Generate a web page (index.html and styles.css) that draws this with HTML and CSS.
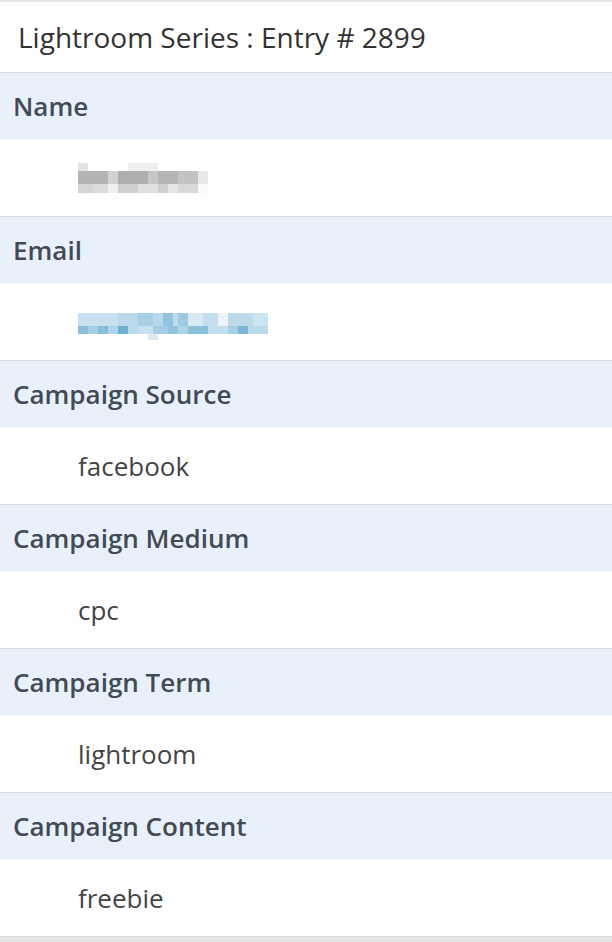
FILE: index.html
```html
<!DOCTYPE html>
<html>
<head>
<meta charset="utf-8">
<link rel="stylesheet" href="styles.css">
</head>
<body>
<div class="panel">
  <div class="title">Lightroom Series : Entry # 2899</div>
  <div class="field">
    <div class="label">Name</div>
    <div class="value"><div class="mosaic mosaic-name"></div></div>
  </div>
  <div class="field">
    <div class="label">Email</div>
    <div class="value"><div class="mosaic mosaic-email"></div></div>
  </div>
  <div class="field">
    <div class="label">Campaign Source</div>
    <div class="value">facebook</div>
  </div>
  <div class="field">
    <div class="label">Campaign Medium</div>
    <div class="value">cpc</div>
  </div>
  <div class="field">
    <div class="label">Campaign Term</div>
    <div class="value">lightroom</div>
  </div>
  <div class="field">
    <div class="label">Campaign Content</div>
    <div class="value">freebie</div>
  </div>
</div>
</body>
</html>
```
FILE: styles.css
```css
html, body {
  margin: 0;
  padding: 0;
  background: #e6e6e6;
}
body {
  font-family: "Open Sans", "Noto Sans", sans-serif;
  width: 612px;
  height: 942px;
  overflow: hidden;
}
.panel {
  margin-top: 2px;
  background: #fff;
}
.title {
  height: 71px;
  box-sizing: border-box;
  padding-left: 18px;
  display: flex;
  align-items: center;
  font-size: 28px;
  color: #333;
  border-bottom: 1px solid #dcdcdc;
}
.field {
  border-bottom: 1px solid #dcdcdc;
}
.label {
  height: 66px;
  display: flex;
  align-items: center;
  padding-left: 13px;
  background: #e8f1fa;
  font-size: 26px;
  font-weight: 600;
  color: #434a54;
}
.value {
  height: 77px;
  display: flex;
  align-items: center;
  padding-left: 78px;
  font-size: 26px;
  color: #444;
  background: #fff;
}
.mosaic {
  position: relative;
}
.mosaic-name {
  width: 130px;
  height: 30px;
  margin-top: 0;
  background:
    linear-gradient(to right, #e4e4e4 0 10px, transparent 10px 50px, #f0f0f0 50px 80px, transparent 80px) 0 0 / 130px 8px no-repeat,
    linear-gradient(to right, #b4b4b4 0 30px, #d2d2d2 30px 40px, #afafaf 40px 70px, #c6c6c6 70px 80px, #b6b6b6 80px 100px, #c2c2c2 100px 120px, #e8e8e8 120px 130px) 0 8px / 130px 13px no-repeat,
    linear-gradient(to right, #d4d4d4 0 15px, #dbdbdb 15px 30px, #f0f0f0 30px 40px, #cfcfcf 40px 60px, #dfdfdf 60px 80px, #cecece 80px 90px, #e6e6e6 90px 100px, #d9d9d9 100px 120px, #fafafa 120px 130px) 0 21px / 130px 9px no-repeat;
}
.mosaic-email {
  width: 190px;
  height: 28px;
  margin-top: 10px;
  background:
    linear-gradient(to right, #c8e0ef 0 40px, #bcd9ec 40px 60px, #a7cfe5 60px 75px, #b9d8eb 75px 85px, #8fc4de 85px 95px, #c0dcec 95px 100px, #9ecbe2 100px 110px, #d8e9f3 110px 125px, #c5dfee 125px 140px, #eef6fb 140px 150px, #bed9ea 150px 175px, #cde4f1 175px 190px) 0 0 / 190px 13px no-repeat,
    linear-gradient(to right, #8cc0da 0 10px, #a6cfe4 10px 20px, #86bdd9 20px 30px, #b0d5e8 30px 40px, #6fb1d1 40px 50px, #b8daeb 50px 60px, #c8e1ef 60px 75px, #a4cde3 75px 90px, #92c5de 90px 100px, #b0d4e7 100px 110px, #8cc1db 110px 130px, #c3dfee 130px 150px, #a7cfe4 150px 160px, #7db7d5 160px 170px, #b9d9ea 170px 190px) 0 13px / 190px 8px no-repeat,
    linear-gradient(to right, transparent 0 70px, #dfeaf0 70px 80px, transparent 80px) 0 21px / 190px 6px no-repeat;
}
```
